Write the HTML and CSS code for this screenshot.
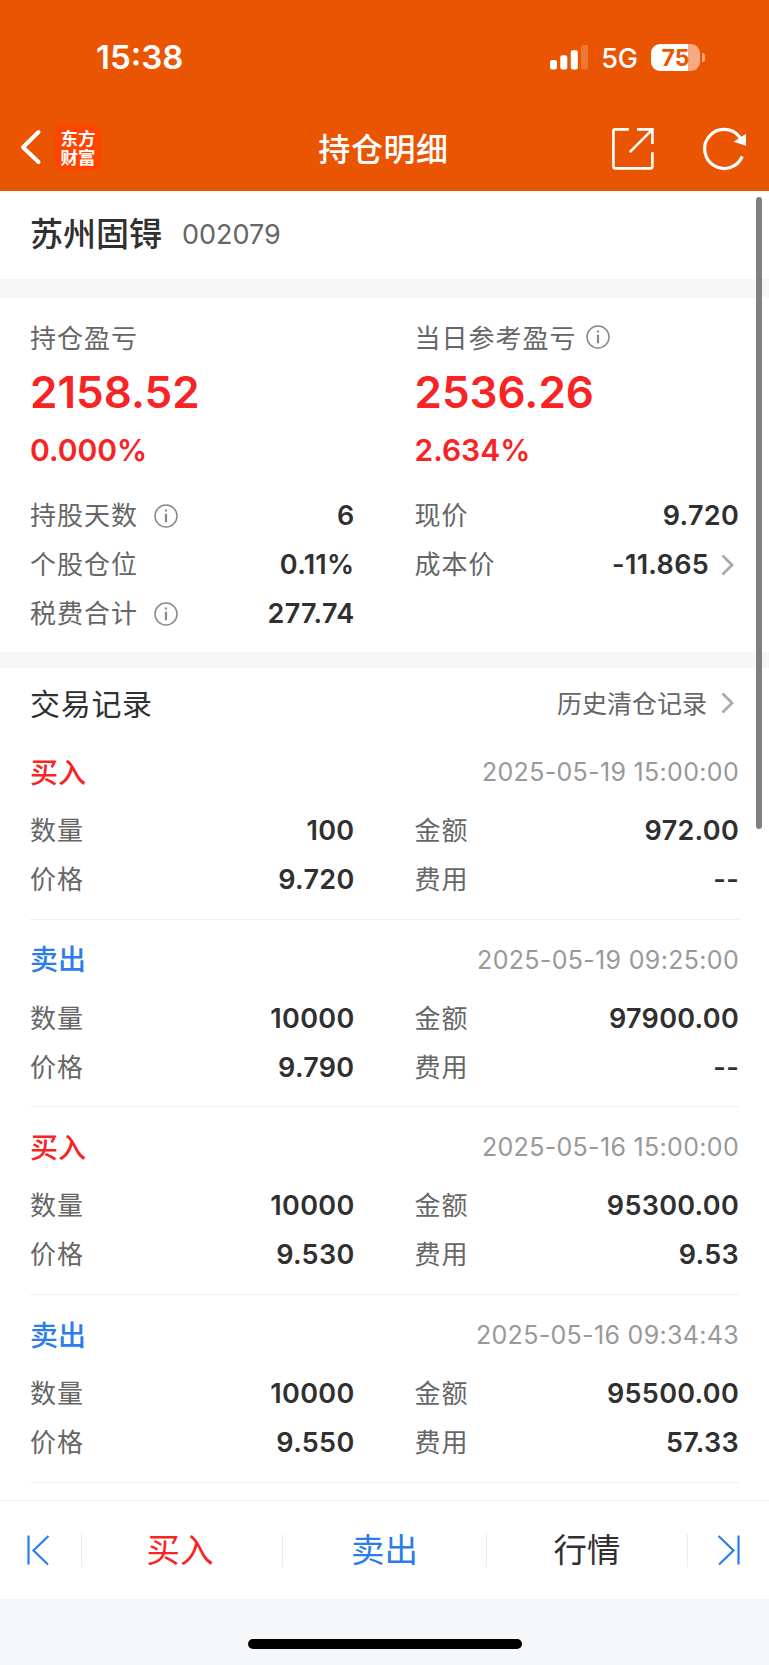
FILE: index.html
```html
<!DOCTYPE html>
<html lang="zh-CN">
<head>
    <meta charset="UTF-8">
    <title>持仓明细</title>
    <meta name="viewport" content="width=device-width, initial-scale=1.0">
    <link rel="stylesheet" href="styles.css">
</head>
<body>

<header class="header">
    <div class="status-bar">
        <span class="time">15:38</span>
        <div class="status-right">
            <svg class="signal" width="39" height="25" viewBox="0 0 39 25" fill="#fff">
                <rect x="0" y="15" width="7" height="9.5" rx="2"/>
                <rect x="10.3" y="10.3" width="7" height="14.2" rx="2"/>
                <rect x="20.8" y="5.2" width="7" height="19.3" rx="2"/>
                <rect x="31" y="0" width="7" height="24.5" rx="2" opacity="0.2"/>
            </svg>
            <span class="network">5G</span>
            <div class="battery"><span>75</span></div>
            <div class="battery-cap"></div>
        </div>
    </div>
    <div class="nav">
        <div class="nav-left">
            <svg width="22" height="38" viewBox="0 0 22 38" fill="none" stroke="#fff" stroke-width="4" stroke-linecap="round" stroke-linejoin="round">
                <path d="M18.5 3 3 18.2 18.5 33"/>
            </svg>
            <div class="logo">东方<br>财富</div>
        </div>
        <h1>持仓明细</h1>
        <div class="nav-right">
            <svg width="42" height="42" viewBox="0 0 42 42" fill="none" stroke="#fff" stroke-width="2.6">
                <path d="M16.7 1.4H3.2a1.8 1.8 0 0 0-1.8 1.8v35.4a1.8 1.8 0 0 0 1.8 1.8h35.4a1.8 1.8 0 0 0 1.8-1.8V24.2M25 1.4h15.4V16M40 1.8 17.8 24.2"/>
            </svg>
            <svg width="44" height="44" viewBox="0 0 44 44">
                <path d="M39.2 29.4A19.5 19.5 0 1 1 36 9.3L38 12" fill="none" stroke="#fff" stroke-width="3.2"/>
                <path d="M43 6.8V18.8L30.7 14.8Z" fill="#fff"/>
            </svg>
        </div>
    </div>
</header>

<section class="stock">
    <h2>苏州固锝</h2>
    <span class="code">002079</span>
</section>

<section class="summary">
    <div class="col">
        <div class="label">持仓盈亏</div>
        <div class="profit">2158.52</div>
        <div class="percent">0.000%</div>
        <div class="row">
            <span class="label">持股天数</span>
            <svg class="info" viewBox="0 0 24 24"><circle cx="12" cy="12" r="11"/><path d="M12 9.8V18.2M12 5.4V7.4"/></svg>
            <span class="value">6</span>
        </div>
        <div class="row">
            <span class="label">个股仓位</span>
            <span class="value">0.11%</span>
        </div>
        <div class="row">
            <span class="label">税费合计</span>
            <svg class="info" viewBox="0 0 24 24"><circle cx="12" cy="12" r="11"/><path d="M12 9.8V18.2M12 5.4V7.4"/></svg>
            <span class="value">277.74</span>
        </div>
    </div>
    <div class="col">
        <div class="label">当日参考盈亏
            <svg class="info near" viewBox="0 0 24 24"><circle cx="12" cy="12" r="11"/><path d="M12 9.8V18.2M12 5.4V7.4"/></svg>
        </div>
        <div class="profit">2536.26</div>
        <div class="percent">2.634%</div>
        <div class="row">
            <span class="label">现价</span>
            <span class="value">9.720</span>
        </div>
        <div class="row">
            <span class="label">成本价</span>
            <span class="value">-11.865</span>
            <svg class="arrow" viewBox="0 0 13 22"><path d="M1.5 1.5 11 11 1.5 20.5"/></svg>
        </div>
    </div>
</section>

<main class="records">
    <div class="records-head">
        <h3>交易记录</h3>
        <a class="history">历史清仓记录</a>
        <svg class="arrow" viewBox="0 0 13 22"><path d="M1.5 1.5 11 11 1.5 20.5"/></svg>
    </div>

    <div class="record">
        <div class="record-top"><span class="buy">买入</span><span class="date">2025-05-19 15:00:00</span></div>
        <div class="record-grid">
            <div class="row"><span class="label">数量</span><span class="value">100</span></div>
            <div class="row"><span class="label">金额</span><span class="value">972.00</span></div>
            <div class="row"><span class="label">价格</span><span class="value">9.720</span></div>
            <div class="row"><span class="label">费用</span><span class="value">--</span></div>
        </div>
    </div>

    <div class="record">
        <div class="record-top"><span class="sell">卖出</span><span class="date">2025-05-19 09:25:00</span></div>
        <div class="record-grid">
            <div class="row"><span class="label">数量</span><span class="value">10000</span></div>
            <div class="row"><span class="label">金额</span><span class="value">97900.00</span></div>
            <div class="row"><span class="label">价格</span><span class="value">9.790</span></div>
            <div class="row"><span class="label">费用</span><span class="value">--</span></div>
        </div>
    </div>

    <div class="record">
        <div class="record-top"><span class="buy">买入</span><span class="date">2025-05-16 15:00:00</span></div>
        <div class="record-grid">
            <div class="row"><span class="label">数量</span><span class="value">10000</span></div>
            <div class="row"><span class="label">金额</span><span class="value">95300.00</span></div>
            <div class="row"><span class="label">价格</span><span class="value">9.530</span></div>
            <div class="row"><span class="label">费用</span><span class="value">9.53</span></div>
        </div>
    </div>

    <div class="record">
        <div class="record-top"><span class="sell">卖出</span><span class="date">2025-05-16 09:34:43</span></div>
        <div class="record-grid">
            <div class="row"><span class="label">数量</span><span class="value">10000</span></div>
            <div class="row"><span class="label">金额</span><span class="value">95500.00</span></div>
            <div class="row"><span class="label">价格</span><span class="value">9.550</span></div>
            <div class="row"><span class="label">费用</span><span class="value">57.33</span></div>
        </div>
    </div>
</main>

<nav class="tabs">
    <a class="tab edge first">
        <svg width="24" height="32" viewBox="0 0 24 32"><path d="M2.5 1.5V30.5M22.5 2 7.5 16.5 22 30.5"/></svg>
    </a>
    <a class="tab buy">买入</a>
    <a class="tab sell">卖出</a>
    <a class="tab">行情</a>
    <a class="tab edge">
        <svg width="24" height="32" viewBox="0 0 24 32"><path d="M21.5 1.5V30.5M1.5 2 16.5 16.5 2 30.5"/></svg>
    </a>
</nav>

<footer class="home"><div class="home-bar"></div></footer>

<div class="scrollbar"></div>

</body>
</html>
```

FILE: styles.css
```css
* { box-sizing: border-box; }
body {
    margin: 0;
    height: 1665px;
    display: flex;
    flex-direction: column;
    overflow: hidden;
    background: #fff;
    color: #303030;
    font-family: 'Noto Sans CJK SC', sans-serif;
    line-height: 1;
}
h1, h2, h3 { margin: 0; font-weight: 500; }

/* Header */
.header {
    height: 191px;
    flex: none;
    background: #ea5504;
    color: #fff;
}
.status-bar {
    height: 106px;
    padding: 9px 64px 0 96px;
    display: flex;
    align-items: center;
    justify-content: space-between;
    font-family: 'Inter', sans-serif;
}
.time { font-size: 33px; font-weight: 600; }
.status-right { display: flex; align-items: center; }
.network { font-size: 27px; font-weight: 500; margin: 2px 13px 0 12px; }
.battery {
    width: 49px;
    height: 27px;
    padding-left: 0;
    border-radius: 9px;
    background: linear-gradient(to right, #fff 36.5px, #f6aa82 36.5px);
    color: #ea5504;
    font-size: 23px;
    font-weight: 700;
    line-height: 28px;
    text-align: center;
}
.battery-cap {
    width: 3px;
    height: 9px;
    margin-left: 2px;
    border-radius: 0 4px 4px 0;
    background: #f6aa82;
}
.nav {
    height: 85px;
    padding: 0 22px 0 20px;
    display: grid;
    grid-template-columns: 1fr auto 1fr;
    align-items: center;
}
.nav h1 { font-size: 32px; letter-spacing: 0.6px; padding-bottom: 4px; }
.nav svg { display: block; }
.nav-left { display: flex; align-items: center; gap: 13px; padding-bottom: 1px; }
.logo {
    width: 46px;
    height: 46px;
    padding-top: 3px;
    border-radius: 9px;
    background: #ff4400;
    font-size: 17.5px;
    font-weight: 700;
    line-height: 19px;
    text-align: center;
}
.nav-right { display: flex; align-items: center; justify-content: flex-end; gap: 49px; }

/* Stock name */
.stock {
    height: 88px;
    flex: none;
    padding: 0 30px 2px;
    display: flex;
    align-items: center;
    gap: 20px;
}
.stock h2 { font-size: 33px; padding-bottom: 3px; }
.code { font-family: 'Inter', sans-serif; font-size: 27px; color: #666; }

/* Profit summary */
.summary {
    height: 389px;
    flex: none;
    padding: 21px 30px 0;
    border-top: 19px solid #f6f7f9;
    border-bottom: 16px solid #f6f7f9;
    display: grid;
    grid-template-columns: 1fr 1fr;
    column-gap: 60px;
}
.label {
    display: flex;
    align-items: center;
    padding-bottom: 3px;
    color: #666;
    font-size: 26px;
    letter-spacing: 1px;
}
.col > .label { height: 38px; padding-bottom: 2px; }
.profit, .percent { font-family: 'Inter', sans-serif; font-weight: 600; color: #f82323; }
.profit { font-size: 44px; line-height: 70px; }
.percent { font-size: 30px; line-height: 46px; margin-bottom: 18px; }
.row { height: 49px; display: flex; align-items: center; }
.value {
    margin-left: auto;
    font-family: 'Inter', sans-serif;
    font-size: 27px;
    font-weight: 600;
    letter-spacing: 0.3px;
}
.info {
    width: 24px;
    height: 24px;
    margin-left: 16px;
    fill: none;
    stroke: #888;
    stroke-width: 1.5;
}
.info path { stroke-width: 2.2; }
.info.near { margin-left: 9px; }
.arrow {
    width: 13px;
    height: 22px;
    margin: 0 5px 0 12px;
    fill: none;
    stroke: #aaa;
    stroke-width: 2.8;
}

/* Trade records */
.records { flex: 1; padding: 0 30px; }
.records-head { height: 64px; padding-top: 6px; display: flex; align-items: center; }
.records-head h3 { font-size: 30px; font-weight: 400; letter-spacing: 0.7px; padding-bottom: 3px; }
.history { margin-left: auto; margin-right: 2px; padding-bottom: 2px; font-size: 25px; color: #666; }
.record { height: 187.7px; border-bottom: 1px solid #eff0f2; }
.record-top {
    height: 74px;
    padding-top: 7px;
    display: flex;
    align-items: center;
    justify-content: space-between;
}
.record-top .buy, .record-top .sell { padding-bottom: 4px; font-size: 28px; font-weight: 500; }
.date { font-family: 'Inter', sans-serif; font-size: 25px; letter-spacing: 0.32px; color: #999; }
.record-grid { display: grid; grid-template-columns: 1fr 1fr; column-gap: 60px; }
.buy { color: #f82323; }
.sell { color: #2b7de9; }

/* Bottom bar */
.tabs {
    height: 99px;
    flex: none;
    border-top: 1px solid #f1f2f4;
    display: grid;
    grid-template-columns: 82px 201px 204px 201px 81px;
    align-items: center;
}
.tab {
    height: 33px;
    display: flex;
    align-items: center;
    justify-content: center;
    padding-bottom: 4px;
    border-right: 1px solid #ececee;
    font-size: 33.5px;
}
.tab.buy { padding-right: 4px; }
.tab:last-child { border-right: none; }
.edge { padding-bottom: 0; }
.edge.first { padding-right: 6px; }
.edge svg { fill: none; stroke: #2b7de9; stroke-width: 2.2; }
.home { height: 66px; flex: none; padding-top: 40px; background: #f6f7f9; }
.home-bar { width: 274px; height: 10px; margin: 0 auto; border-radius: 5px; background: #000; }

.scrollbar {
    position: absolute;
    top: 197px;
    right: 7px;
    width: 6px;
    height: 632px;
    border-radius: 3px;
    background: #808080;
}
```
